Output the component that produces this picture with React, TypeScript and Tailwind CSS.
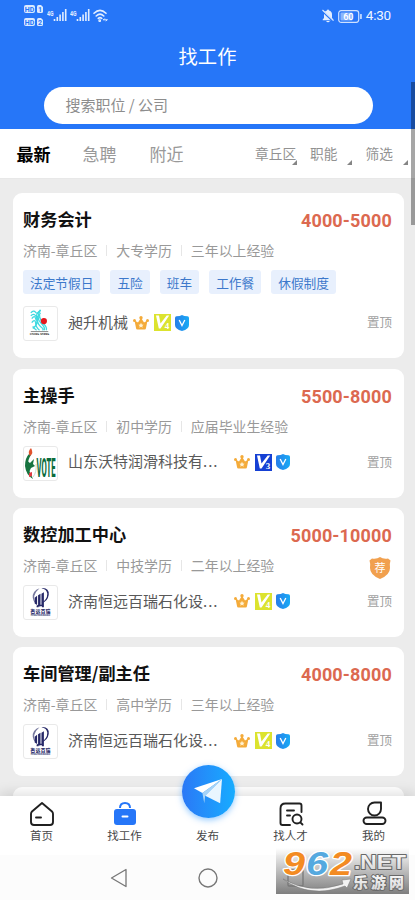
import React from 'react';

interface Job {
  title: string;
  salary: string;
  info: string[];
  tags?: string[];
  company: string;
  truncated?: boolean;
  logo: 'wave' | 'vote' | 'tower';
  level: 3 | 4;
  recommended?: boolean;
}

const jobs: Job[] = [
  {
    title: '财务会计',
    salary: '4000-5000',
    info: ['济南-章丘区', '大专学历', '三年以上经验'],
    tags: ['法定节假日', '五险', '班车', '工作餐', '休假制度'],
    company: '昶升机械',
    logo: 'wave',
    level: 4,
  },
  {
    title: '主操手',
    salary: '5500-8000',
    info: ['济南-章丘区', '初中学历', '应届毕业生经验'],
    company: '山东沃特润滑科技有',
    truncated: true,
    logo: 'vote',
    level: 3,
  },
  {
    title: '数控加工中心',
    salary: '5000-10000',
    info: ['济南-章丘区', '中技学历', '二年以上经验'],
    company: '济南恒远百瑞石化设',
    truncated: true,
    logo: 'tower',
    level: 4,
    recommended: true,
  },
  {
    title: '车间管理/副主任',
    salary: '4000-8000',
    info: ['济南-章丘区', '高中学历', '三年以上经验'],
    company: '济南恒远百瑞石化设',
    truncated: true,
    logo: 'tower',
    level: 4,
  },
];

const HdBadge = ({ n }: { n: string }) => (
  <svg width="19" height="8" viewBox="0 0 19 8">
    <rect width="11" height="8" rx="2" fill="#dbe9ff" />
    <path d="M13 1.500Q13 0 14.500 0H17L19 2V6.500Q19 8 17.500 8H14.500Q13 8 13 6.500Z" fill="#dbe9ff" />
    <text x="5.500" y="6.600" fontSize="7" fontWeight="700" textAnchor="middle" fill="#2676f8">HD</text>
    <text x="16" y="6.600" fontSize="7" fontWeight="700" textAnchor="middle" fill="#2676f8">{n}</text>
  </svg>
);

const Signal = () => (
  <svg width="20" height="13" viewBox="0 0 20 13" fill="#e3eeff">
    <text x="0" y="6.500" fontSize="7.500" fontWeight="700" textLength="6.500" lengthAdjust="spacingAndGlyphs">4G</text>
    <rect x="6.700" y="10" width="1.600" height="2" />
    <rect x="9.500" y="8" width="1.600" height="4" />
    <rect x="12.300" y="5.500" width="1.600" height="6.500" />
    <rect x="15.100" y="3" width="1.600" height="9" />
    <rect x="17.900" y="0" width="1.600" height="12" />
  </svg>
);

const StatusBar = () => (
  <div className="flex h-8 items-center pl-6 pr-6 font-['Roboto','Noto_Sans_CJK_SC',sans-serif]">
    <div className="mt-[-1px] flex flex-col gap-[5px]">
      <HdBadge n="1" />
      <HdBadge n="2" />
    </div>
    <div className="ml-[4px] mt-[-1px] flex items-center gap-[3px]">
      <Signal />
      <Signal />
      <svg width="15" height="13" viewBox="0 0 15 13" fill="none" stroke="#e3eeff" strokeWidth="1.600" strokeLinecap="round">
        <path d="M1 4.300Q7 -1.700 13 4.300M3.200 7Q7 3.300 10.800 7M5.300 9.400Q7 7.900 8.700 9.400" />
        <circle cx="6.700" cy="11.700" r=".6" />
        <path d="M10.500 10.800H14M11.500 9.800L10.500 10.800M13 11.900L14 10.800" strokeWidth="1" />
      </svg>
    </div>
    <div className="ml-auto flex items-center">
      <svg width="12" height="14" viewBox="0 0 12 14">
        <path d="M6 .5a1 1 0 0 1 1 1C9 2 10 3.500 10 5.500V9l1.300 1.500v.7H.7v-.7L2 9V5.500C2 3.500 3 2 5 1.500a1 1 0 0 1 1-1ZM4.300 12h3.400a1.700 1.300 0 0 1-3.400 0Z" fill="#e3eeff" />
        <path d="M0 1.500L11.500 12.500" stroke="#2676f8" strokeWidth="2.200" />
        <path d="M.5 1L11.500 11.700" stroke="#e3eeff" strokeWidth="1.100" />
      </svg>
      <svg className="ml-[4px]" width="24" height="13" viewBox="0 0 24 13">
        <rect x=".7" y=".7" width="20" height="11.600" rx="2.500" fill="none" stroke="#cfe1ff" strokeWidth="1.200" />
        <rect x="2.500" y="2.500" width="12" height="8" rx="1" fill="#8bb6fc" />
        <text x="10.300" y="9.800" fontSize="9" fontWeight="600" textAnchor="middle" fill="#fff">60</text>
        <rect x="22.200" y="4" width="1.500" height="5" rx=".5" fill="#e3eeff" />
      </svg>
      <span className="ml-[4px] text-[13.500px] leading-none tracking-[-0.200px] text-[#eef5ff]">4:30</span>
    </div>
  </div>
);

const Filter = ({ label, className }: { label: string; className: string }) => (
  <div className={`relative text-[13.700px] text-[#929292] ${className}`}>
    {label}
    <svg className="absolute bottom-[-1px] right-0" width="5" height="5" viewBox="0 0 5 5">
      <path d="M5 0V5H0Z" fill="#858585" />
    </svg>
  </div>
);

const WaveLogo = () => (
  <svg width="33" height="33" viewBox="0 0 34 34" fill="none">
    <g stroke="#3fd9e0" strokeWidth="1.300">
      <path d="M7 6Q10 3 12 5.500T17 3M7 9Q10 6 12 9T17 6M8 12Q11 8 12 12T16 10M8 16Q11 12 12 16T14 14" />
      <path d="M9 22Q15 18 13 12Q12 7 16 4" />
      <path d="M17 3Q12 11 17 16T21 24M14 10Q13 17 17 20T19 24M12 16Q12 21 16 24M9 20Q11 23 13 24M16 8Q16 13 20 17T23 24" />
    </g>
    <circle cx="20.500" cy="14.500" r="3.200" fill="#e5161d" />
    <path d="M7 25.300H25" stroke="#555" strokeWidth=".7" />
    <text x="16" y="28.500" fontSize="2.800" fontWeight="700" textAnchor="middle" fill="#222">CHANG SHENG</text>
  </svg>
);

const VoteLogo = () => (
  <svg width="33" height="33" viewBox="0 0 33 33">
    <path d="M5 7Q1 11 1 19Q2 28 9 32Q5 25 4 18Q4 12 7 8Z" fill="#16733f" />
    <path d="M7 1Q3 5 6 9Q10 6 7 1Z" fill="#e0532e" />
    <path d="M2 13L6 16L10 12L9 17L11 19L7 21L5 25L3 20Z" fill="#16733f" />
    <path d="M12 17Q13 25 9 30" fill="none" stroke="#c9ddcf" strokeWidth="1" />
    <path d="M5 26L8 25V29L5 30Z" fill="#e03b43" />
    <g transform="translate(12.600 29.500) scale(.76 2.650)">
      <text fontSize="10" fontWeight="800" fontFamily="Roboto" fill="#0b6c3d">VOTE</text>
    </g>
  </svg>
);

const TowerLogo = () => (
  <svg width="33" height="33" viewBox="0 0 34 34" fill="#272968">
    <path d="M18 2.200Q26 1.500 25.500 9Q24.500 16 18 17.500Q24 14 24 8Q23.500 3 18 2.200Z" />
    <path d="M16 2.300Q8.500 5 9 12Q9.500 16 12 18Q7.500 9.500 16 2.300Z" fill="#77799e" />
    <path d="M11 12L13.500 10V19.500L11 18ZM14.500 9.500L17 8V21H14.500ZM18 8L20.500 6.500V20L18 21ZM13 20Q17 18 20.500 20V22H18.500V20.500H15V22H13Z" />
    <text x="17" y="28" fontSize="4.800" fontWeight="900" textAnchor="middle" textLength="20.500">衡远百瑞</text>
    <text x="17" y="31" fontSize="2.300" fontWeight="600" textAnchor="middle" textLength="20">HENGYUAN BAIRUI</text>
  </svg>
);

const Logo = ({ kind }: { kind: Job['logo'] }) => (
  <div className="size-[35px] shrink-0 rounded-[3px] border border-[#e9e9e9] bg-white">
    {kind === 'wave' && <WaveLogo />}
    {kind === 'vote' && <VoteLogo />}
    {kind === 'tower' && <TowerLogo />}
  </div>
);

const Crown = () => (
  <svg width="16" height="14" viewBox="0 0 16 14" fill="#f4ab3a">
    <path d="M1.500 4.500L5 6.500L8 1.800L11 6.500L14.500 4.500L13 12Q13 13.500 11.500 13.500H4.500Q3 13.500 3 12Z" />
    <circle cx="1.500" cy="4.500" r="1.500" />
    <circle cx="14.500" cy="4.500" r="1.500" />
    <circle cx="8" cy="1.700" r="1.700" />
    <path d="M8 6.800L8.800 8.500L10.600 8.700L9.300 9.900L9.700 11.700L8 10.800L6.300 11.700L6.700 9.900L5.400 8.700L7.200 8.500Z" fill="#fff3d5" />
  </svg>
);

const Level = ({ level }: { level: 3 | 4 }) => (
  <svg width="17" height="17" viewBox="0 0 17 17">
    <rect width="17" height="17" fill={level === 3 ? '#1540d4' : '#dce32e'} />
    <path d="M2 1.500H5L6.500 9.500L12.700 1.500H15.200L6.500 14.500H4.800Z" fill="#fff" />
    <text x="13" y="15" fontSize="9" fontWeight="700" fontFamily="Liberation Serif" textAnchor="middle" fill="#fff">{level}</text>
  </svg>
);

const Shield = () => (
  <svg width="14" height="16" viewBox="0 0 14 16">
    <defs>
      <linearGradient id="shield" x1="0" x2="1">
        <stop offset="0" stopColor="#287ee9" />
        <stop offset="1" stopColor="#18aaf5" />
      </linearGradient>
    </defs>
    <path d="M7 0Q9 1.200 12.500 1.300Q14 1.500 14 3V10Q14 14 7 16Q0 14 0 10V3Q0 1.500 1.500 1.300Q5 1.200 7 0Z" fill="url(#shield)" />
    <path d="M4.200 5L7 10.500L9.800 5" fill="none" stroke="#fff" strokeWidth="1.300" />
  </svg>
);

const JobCard = ({ job }: { job: Job }) => (
  <div className="relative shrink-0 rounded-[9px] bg-white pb-[17px] pl-[10.500px] pr-[11.500px] pt-[13px]">
    <div className="flex h-[26px] items-center justify-between">
      <h3 className="text-[17.200px] font-bold text-[#111]">{job.title}</h3>
      <span className="mt-[3px] font-['Roboto','Noto_Sans_CJK_SC',sans-serif] text-[18px] font-bold tracking-[0.150px] text-[#dc6950]">{job.salary}</span>
    </div>
    <div className="mb-px flex h-[37px] items-center text-[13.900px] text-[#999]">
      {job.info.map((item, i) => (
        <React.Fragment key={item}>
          {i > 0 && <span className="mx-[9px] h-[11px] w-px bg-[#e6e6e6]" />}
          <span>{item}</span>
        </React.Fragment>
      ))}
    </div>
    {job.tags && (
      <div className="mb-3 flex h-6 gap-[10px]">
        {job.tags.map((tag) => (
          <span key={tag} className="flex items-center rounded-[3px] bg-[#e8f0fd] px-[7px] text-[12.700px] text-[#3c78cb]">
            {tag}
          </span>
        ))}
      </div>
    )}
    <div className="flex h-[35px] items-center">
      <Logo kind={job.logo} />
      <span className={`-mt-[3px] ml-[10px] whitespace-nowrap text-[15px] text-[#595959] ${job.truncated ? 'w-[166px]' : 'w-[65px]'}`}>
        {job.company}
        {job.truncated && <span className="tracking-[1px]">...</span>}
      </span>
      <div className="-mt-[2px] flex items-center gap-[4.500px]">
        <Crown />
        <Level level={job.level} />
        <Shield />
      </div>
      <span className="-mt-[2px] ml-auto text-[12.500px] text-[#a2a2a2]">置顶</span>
    </div>
    {job.recommended && (
      <svg className="absolute right-[12.500px] top-[49px]" width="22" height="22" viewBox="0 0 22 22">
        <path d="M11 0Q14 2.200 19 1.500L21.500 3.500Q20.500 6 21 11Q21 18 11 22Q1 18 1 11Q1.500 6 .5 3.500L3 1.500Q8 2.200 11 0Z" fill="#f1a04e" />
        <text x="11" y="15" fontSize="11" textAnchor="middle" fill="#fff">荐</text>
      </svg>
    )}
  </div>
);

const NavItem = ({ label, children }: { label: string; children?: React.ReactNode }) => (
  <div className="flex flex-1 flex-col items-center pt-1">
    <div className="h-[26px]">{children}</div>
    <span className="text-[11.500px] leading-[18px] text-[#484848]">{label}</span>
  </div>
);

const Watermark = () => (
  <svg className="absolute bottom-[6px] right-[6px] overflow-visible" width="133" height="46" viewBox="0 0 133 46">
    <defs>
      <linearGradient id="shade" x1="0" y1="0" x2="0" y2="1">
        <stop offset="0" stopColor="#777" stopOpacity="0" />
        <stop offset="1" stopColor="#777" stopOpacity=".95" />
      </linearGradient>
      <linearGradient id="silver" x1="0" y1="0" x2="0" y2="1">
        <stop offset="0" stopColor="#fff" />
        <stop offset="1" stopColor="#d4d4d4" />
      </linearGradient>
    </defs>
    <rect width="133" height="46" fill="url(#shade)" />
    <path d="M7 31Q34 47 67 36L66 32L75 31L71 40L69 38Q34 51 7 31Z" fill="#f2f2f2" stroke="#777" strokeWidth=".5" />
    <g fontFamily="Liberation Sans" fontWeight="700" fontStyle="italic" fontSize="34" paintOrder="stroke" stroke="#fff" strokeWidth="2.500" strokeLinejoin="round">
      <text x="7" y="27" textLength="22" lengthAdjust="spacingAndGlyphs" fill="#f38b22">9</text>
      <text x="30" y="27" textLength="22" lengthAdjust="spacingAndGlyphs" fill="#55a9df">6</text>
      <text x="54" y="27" textLength="22" lengthAdjust="spacingAndGlyphs" fill="#f38b22">2</text>
    </g>
    <g fontWeight="900" paintOrder="stroke" stroke="#686868" strokeWidth="2" strokeLinejoin="round" fill="url(#silver)">
      <text x="78" y="21" fontSize="20" fontFamily="Liberation Sans" textLength="52" lengthAdjust="spacingAndGlyphs">.NET</text>
      <text x="77" y="40" fontSize="15" textLength="51">乐游网</text>
    </g>
  </svg>
);

export default function App() {
  return (
    <div className="relative flex h-[900px] w-[415px] flex-col overflow-hidden bg-[#ececec] font-['Noto_Sans_CJK_SC',sans-serif]">
      <header className="h-[129px] shrink-0 bg-[#2676f8]">
        <StatusBar />
        <h1 className="flex h-[48px] items-center justify-center text-[19.300px] text-white">找工作</h1>
        <div className="ml-[43.500px] mt-[7px] flex h-[36.500px] w-[329px] items-center rounded-full bg-white pl-[22px] text-[15px] text-[#8d8d8d]">
          搜索职位 / 公司
        </div>
      </header>

      <nav className="flex h-[50px] shrink-0 items-center border-b border-[#e8e8e8] bg-white pl-[16.500px] text-[17px] text-[#999]">
        <span className="font-bold text-black">最新</span>
        <span className="ml-8">急聘</span>
        <span className="ml-[33px]">附近</span>
        <div className="ml-auto flex pr-[7.500px]">
          <Filter label="章丘区" className="mr-[13px] w-[42px]" />
          <Filter label="职能" className="mr-[13.500px] w-[42px]" />
          <Filter label="筛选" className="w-[42px]" />
        </div>
      </nav>

      <main className="flex min-h-0 flex-1 flex-col gap-[10.400px] overflow-hidden pl-[12.500px] pr-[11.500px] pt-[14.200px]">
        {jobs.map((job) => (
          <JobCard key={job.title} job={job} />
        ))}
        <div className="h-[129px] shrink-0 rounded-[9px] bg-white" />
      </main>

      <footer className="relative z-10 flex h-[59px] shrink-0 bg-white shadow-[0_-3px_12px_rgba(0,0,0,0.130)]">
        <NavItem label="首页">
          <svg width="26" height="26" viewBox="0 0 26 26" fill="none" stroke="#202020" strokeWidth="1.900" strokeLinejoin="round" strokeLinecap="round">
            <path d="M13 3L23 11.500Q24 12.500 24 14V22Q24 25 21 25H5Q2 25 2 22V14Q2 12.500 3 11.500Z" />
            <path d="M7 17.500H12" />
          </svg>
        </NavItem>
        <NavItem label="找工作">
          <svg width="24" height="26" viewBox="0 0 24 26" fill="none">
            <path d="M7 8Q7 3 12 3T17 8" stroke="#2676f8" strokeWidth="2" />
            <rect x="1" y="9" width="22" height="16" rx="3" fill="#2676f8" />
            <path d="M9.500 16.500H14.500" stroke="#fff" strokeWidth="2" strokeLinecap="round" />
          </svg>
        </NavItem>
        <NavItem label="发布" />
        <NavItem label="找人才">
          <svg width="26" height="26" viewBox="0 0 26 26" fill="none" stroke="#202020" strokeWidth="1.900" strokeLinejoin="round" strokeLinecap="round">
            <path d="M12 25H4.500Q2.500 25 2.500 23V8.500Q2.500 3.500 7.500 3.500H21.500Q23.500 3.500 23.500 5.500V12M9 10.500H16M9 15.500H12" />
            <circle cx="19" cy="19" r="4.500" />
            <path d="M22.300 22.300L24.500 24.500" />
          </svg>
        </NavItem>
        <NavItem label="我的">
          <svg width="26" height="26" viewBox="0 0 26 26" fill="none" stroke="#202020" strokeWidth="1.900" strokeLinejoin="round">
            <path d="M13.500 2.500H20V9A6.500 6.500 0 1 1 13.500 2.500Z" />
            <rect x="2.500" y="17.500" width="22" height="6.500" rx="3.250" />
          </svg>
        </NavItem>
        <div className="absolute left-[181.500px] top-[-31px] flex size-[53px] items-center justify-center rounded-full bg-gradient-to-r from-[#2a78f6] to-[#16acff] shadow-[0_2px_6px_rgba(40,150,255,0.500)]">
          <svg width="32" height="28" viewBox="0 0 34 30">
            <path d="M2 11L32 1L11 16Z" fill="#fff" />
            <path d="M11 16L32 1L14 19L13 27Z" fill="#a6d3f7" />
            <path d="M14 19L32 1L30 27Z" fill="#e9f6ff" />
          </svg>
        </div>
      </footer>

      <div className="relative z-10 flex h-[45px] shrink-0 items-center justify-between bg-[#fcfcfc] pl-[110px] pr-[111px]">
        <svg width="18" height="20" viewBox="0 0 18 20" fill="none" stroke="#777" strokeWidth="1.300" strokeLinejoin="round">
          <path d="M16 1.500V18.500L1.500 10Z" />
        </svg>
        <svg width="20" height="20" viewBox="0 0 20 20" fill="none" stroke="#777" strokeWidth="1.400">
          <circle cx="10" cy="10" r="9" />
        </svg>
        <svg width="17" height="18" viewBox="0 0 17 18" fill="none" stroke="#777" strokeWidth="1.300">
          <rect x="1" y="1" width="15" height="16" rx="1" />
        </svg>
        <Watermark />
      </div>

      <div className="absolute right-0 top-[82px] z-20 h-[143px] w-1 bg-black/35" />
    </div>
  );
}
